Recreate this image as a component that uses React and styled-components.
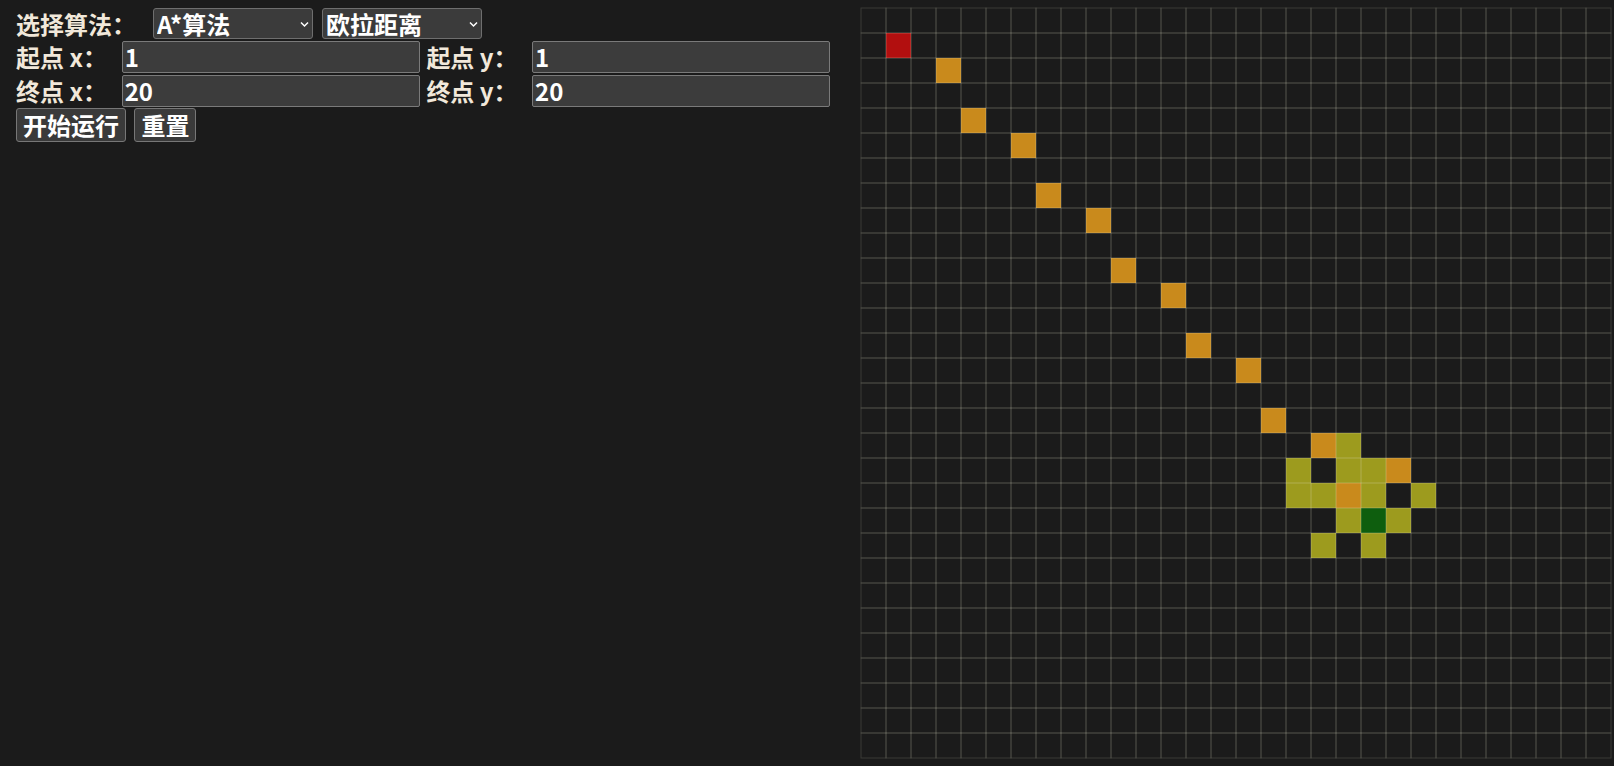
import React from 'react';
import styled, { createGlobalStyle } from 'styled-components';

const Global = createGlobalStyle`
  html, body { margin: 0; padding: 0; background: #1b1b1b; overflow: hidden; }
  body { font-family: "Noto Sans CJK SC", "Noto Sans", sans-serif; }
  * { box-sizing: border-box; }
`;

const Page = styled.div`
  display: flex;
  align-items: flex-start;
  width: 1614px;
  height: 766px;
  padding-left: 8px;
`;

const Controls = styled.div`
  width: 852px;
  padding-left: 8px;
  margin-top: 8px;
  display: flex;
  flex-direction: column;
`;

const Row = styled.div`
  display: flex;
  align-items: center;
  height: ${(p) => p.$h}px;
  margin-top: ${(p) => p.$mt || 0}px;
`;

const Label = styled.span`
  width: ${(p) => p.$w}px;
  margin-left: ${(p) => p.$ml || 0}px;
  flex: none;
  font-size: 24px;
  font-weight: 700;
  line-height: 1;
  color: #f1e8da;
  white-space: nowrap;
`;

const SelectWrap = styled.div`
  position: relative;
  width: 160px;
  height: 31px;
  margin-right: ${(p) => p.$mr || 0}px;
  flex: none;
`;

const Select = styled.select`
  appearance: none;
  -webkit-appearance: none;
  width: 100%;
  height: 100%;
  margin: 0;
  padding: 0 0 0 3px;
  background: #3b3b3b;
  border: 1px solid #6e6e6e;
  border-radius: 3px;
  color: #ffffff;
  font-family: "Noto Sans CJK SC", "Noto Sans", sans-serif;
  font-size: 24px;
  font-weight: 700;
  line-height: 29px;
  outline: none;
`;

const Chevron = styled.svg`
  position: absolute;
  right: 4px;
  top: 13px;
  width: 9px;
  height: 7px;
  pointer-events: none;
`;

const Input = styled.input`
  width: 298px;
  height: 100%;
  margin: 0;
  flex: none;
  padding: 0 2px;
  background: #3c3c3c;
  border: 1px solid #7a7a7a;
  border-radius: 2px;
  color: #ffffff;
  font-family: "Noto Sans CJK SC", "Noto Sans", sans-serif;
  font-size: 24px;
  font-weight: 700;
  outline: none;
`;

const Buttons = styled.div`
  display: flex;
  gap: 8.4px;
  margin-top: 1px;
`;

const Button = styled.button`
  height: 33.4px;
  margin: 0;
  padding: 0 6px;
  background: #3a3a3a;
  border: 1px solid #777777;
  border-radius: 3px;
  color: #ffffff;
  font-family: "Noto Sans CJK SC", "Noto Sans", sans-serif;
  font-size: 24px;
  font-weight: 700;
  line-height: 1;
  cursor: pointer;
`;

const Board = styled.svg`
  flex: none;
  margin-top: 7px;
  display: block;
`;

const SIZE = 30;
const CELL = 25;

const COLORS = {
  start: '#b20f0f',
  path: '#c98a1c',
  open: '#9d9b1e',
  end: '#0e5e0e',
};

const cells = [
  [1, 1, 'start'],
  [3, 2, 'path'],
  [4, 4, 'path'],
  [6, 5, 'path'],
  [7, 7, 'path'],
  [9, 8, 'path'],
  [10, 10, 'path'],
  [12, 11, 'path'],
  [13, 13, 'path'],
  [15, 14, 'path'],
  [16, 16, 'path'],
  [18, 17, 'path'],
  [19, 17, 'open'],
  [17, 18, 'open'],
  [19, 18, 'open'],
  [20, 18, 'open'],
  [21, 18, 'path'],
  [17, 19, 'open'],
  [18, 19, 'open'],
  [19, 19, 'path'],
  [20, 19, 'open'],
  [22, 19, 'open'],
  [19, 20, 'open'],
  [20, 20, 'end'],
  [21, 20, 'open'],
  [18, 21, 'open'],
  [20, 21, 'open'],
];

function Grid() {
  const strokes = [];
  for (let r = 0; r < SIZE; r++) {
    for (let c = 0; c < SIZE; c++) {
      strokes.push(
        <rect
          key={`s${r}-${c}`}
          x={1 + c * CELL}
          y={1 + r * CELL}
          width={CELL}
          height={CELL}
          fill="none"
          stroke="rgba(230,225,200,0.16)"
          strokeWidth="1"
        />
      );
    }
  }
  return (
    <Board width="752" height="752" viewBox="0 0 752 752">
      {cells.map(([c, r, t]) => (
        <rect
          key={`f${c}-${r}`}
          x={1 + c * CELL}
          y={1 + r * CELL}
          width={CELL}
          height={CELL}
          fill={COLORS[t]}
        />
      ))}
      {strokes}
    </Board>
  );
}

function Dropdown({ value, options, mr }) {
  return (
    <SelectWrap $mr={mr}>
      <Select defaultValue={value}>
        {options.map((o) => (
          <option key={o} value={o}>
            {o}
          </option>
        ))}
      </Select>
      <Chevron viewBox="0 0 9 7">
        <path d="M1 1.5 L4.5 5 L8 1.5" fill="none" stroke="#ffffff" strokeWidth="1.5" />
      </Chevron>
    </SelectWrap>
  );
}

export default function App() {
  return (
    <>
      <Global />
      <Page>
        <Controls>
          <Row $h={31}>
            <Label $w={137}>选择算法：</Label>
            <Dropdown value="A*算法" options={['A*算法', 'Dijkstra算法', 'BFS算法']} mr={9} />
            <Dropdown value="欧拉距离" options={['欧拉距离', '曼哈顿距离', '切比雪夫距离']} />
          </Row>
          <Row $h={32.6} $mt={1.7}>
            <Label $w={105.7}>起点 x：</Label>
            <Input defaultValue="1" />
            <Label $w={105.7} $ml={6.7}>起点 y：</Label>
            <Input defaultValue="1" />
          </Row>
          <Row $h={32.6} $mt={1.4}>
            <Label $w={105.7}>终点 x：</Label>
            <Input defaultValue="20" />
            <Label $w={105.7} $ml={6.7}>终点 y：</Label>
            <Input defaultValue="20" />
          </Row>
          <Buttons>
            <Button>开始运行</Button>
            <Button>重置</Button>
          </Buttons>
        </Controls>
        <Grid />
      </Page>
    </>
  );
}
